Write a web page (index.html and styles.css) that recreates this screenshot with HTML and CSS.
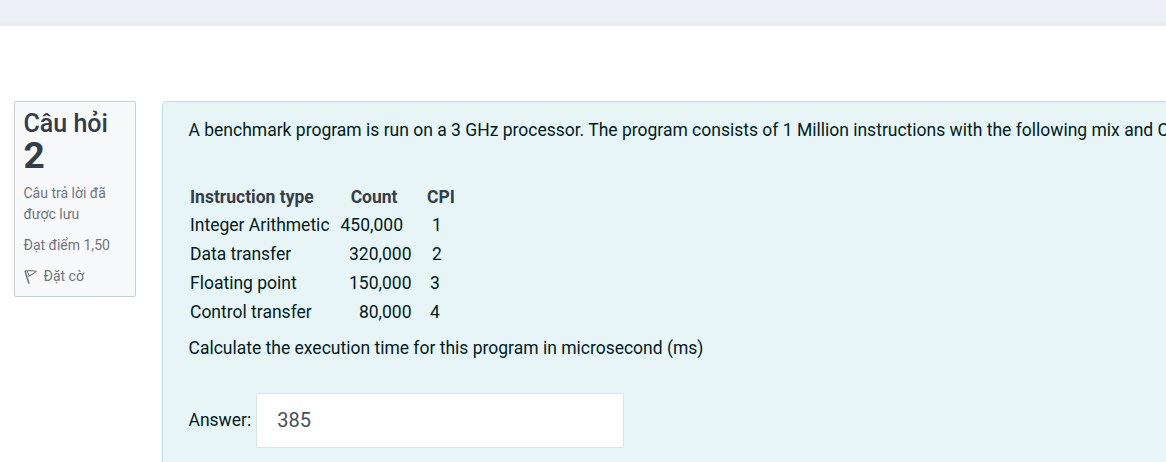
FILE: index.html
```html
<!DOCTYPE html>
<html lang="vi">
<head>
<meta charset="utf-8">
<title>Câu hỏi 2</title>
<link rel="stylesheet" href="styles.css">
</head>
<body>
<header class="topbar"></header>
<main class="question">
  <aside class="info">
    <h3 class="title">Câu hỏi <span class="number">2</span></h3>
    <div class="state">Câu trả lời đã được lưu</div>
    <div class="grade">Đạt điểm 1,50</div>
    <div class="flag">
      <svg class="flag-icon" viewBox="0 0 14 16" width="14" height="16" fill="none" stroke="#77787a" stroke-width="1.1" stroke-linejoin="round">
        <path d="M1 1.7L5 14.7" stroke-width="1.6"/>
        <path d="M1.2 1.7L7 1.5L12.4 2.2L9.5 4.6L4.4 7.5M3.2 2.1L5 6.6"/>
      </svg>
      <span>Đặt cờ</span>
    </div>
  </aside>
  <section class="formulation">
    <p class="prompt">A benchmark program is run on a 3 GHz processor. The program consists of 1 Million instructions with the following mix and C</p>
    <table class="mix">
      <thead>
        <tr><th class="type">Instruction type</th><th class="count">Count</th><th class="cpi">CPI</th></tr>
      </thead>
      <tbody>
        <tr><td>Integer Arithmetic</td><td class="count flush">450,000</td><td class="cpi">1</td></tr>
        <tr><td>Data transfer</td><td class="count">320,000</td><td class="cpi">2</td></tr>
        <tr><td>Floating point</td><td class="count">150,000</td><td class="cpi near">3</td></tr>
        <tr><td>Control transfer</td><td class="count">80,000</td><td class="cpi near">4</td></tr>
      </tbody>
    </table>
    <p class="task">Calculate the execution time for this program in microsecond (ms)</p>
    <div class="answer">
      <label for="answer">Answer:</label>
      <input id="answer" class="field" type="text" value="385">
    </div>
  </section>
</main>
</body>
</html>
```
FILE: styles.css
```css
* { box-sizing: border-box; }
body {
  margin: 0;
  height: 462px;
  overflow: hidden;
  background: #fff;
  font: 400 17.5px/27px Roboto, sans-serif;
  color: #001a1e;
}
.topbar {
  height: 26px;
  background: linear-gradient(#edf0f9 0, #edf0f9 20px, #e6eaee 26px);
}
.question {
  display: flex;
  align-items: flex-start;
  gap: 26px;
  height: 436px;
  padding: 75px 0 0 14px;
}
.info {
  flex: none;
  width: 122px;
  height: 196px;
  padding: 8px 8.5px;
  background: #f8f9fb;
  border: 1px solid #c9cdd6;
  border-radius: 2px;
  font-size: 14px;
  line-height: 21px;
  color: #6f7580;
}
.title {
  margin: 0;
  font-size: 25px;
  font-weight: 500;
  line-height: 28px;
  color: #343d4a;
}
.number {
  display: block;
  font-size: 37px;
  font-weight: 700;
  line-height: 36px;
}
.state { margin-top: 9px; }
.grade { margin-top: 10px; }
.flag {
  display: flex;
  align-items: center;
  gap: 6px;
  margin-top: 10px;
}
.flag-icon { flex: none; }
.formulation {
  flex: 1;
  min-width: 0;
  height: 361px;
  padding: 15px 0 0 25.5px;
  background: #e7f5f6;
  border: solid #b8e2e6;
  border-width: 1px 0 0 1px;
  border-radius: 5px 0 0 0;
}
.prompt {
  margin: 0 0 39px;
  white-space: nowrap;
}
.mix {
  table-layout: fixed;
  width: 280px;
  border-collapse: collapse;
}
.mix th, .mix td {
  padding: 1px 1.5px;
  text-align: left;
}
.mix th { color: #343d4a; font-weight: 700; padding-bottom: 0; }
.mix .type { width: 146px; }
.mix .count { width: 84px; padding-right: 7px; text-align: right; }
.mix th.count { padding-right: 21px; }
.mix .flush { padding-right: 15.5px; }
.mix .cpi { padding-left: 13.5px; }
.mix th.cpi { padding-left: 8.5px; }
.mix .near { padding-left: 11.5px; }
.task { margin: 8px 0 31px; }
.answer {
  display: flex;
  align-items: center;
  gap: 5px;
}
.field {
  width: 368px;
  height: 55px;
  padding: 0 20px 2px;
  border: 1px solid #dee2e6;
  border-radius: 3px;
  background: #fff;
  color: #495057;
  font: 400 20px Roboto, sans-serif;
}
```
